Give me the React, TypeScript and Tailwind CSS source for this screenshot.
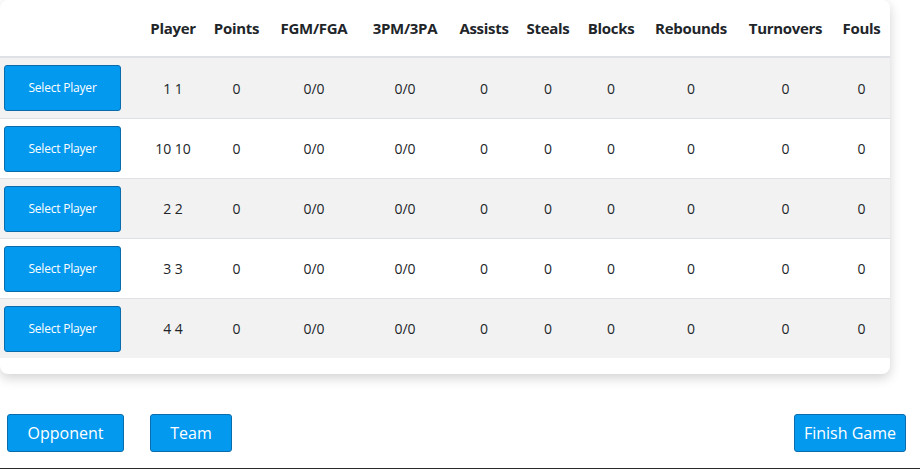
const columns = [
  { label: "", w: "w-[141px]" },
  { label: "Player", w: "w-[64px]" },
  { label: "Points", w: "w-[63px]" },
  { label: "FGM/FGA", w: "w-[92px]" },
  { label: "3PM/3PA", w: "w-[90px]" },
  { label: "Assists", w: "w-[68px]" },
  { label: "Steals", w: "w-[60px]" },
  { label: "Blocks", w: "w-[66px]" },
  { label: "Rebounds", w: "w-[94px]" },
  { label: "Turnovers", w: "w-[95px]" },
  { label: "Fouls", w: "w-[57px]" },
];

const players = ["1 1", "10 10", "2 2", "3 3", "4 4"];

export default function App() {
  return (
    <div className="h-[469px] w-[920px] bg-white font-['Open_Sans',sans-serif] text-[#212529] flex flex-col border-b border-[#2a2a2a]">
      {/* Stats table card */}
      <div className="w-[890px] rounded-lg bg-white shadow-[0_4px_12px_rgba(0,0,0,0.18)] pb-4">
        <div className="flex h-[58px] items-center pt-px border-b-2 border-[#dee2e6]">
          {columns.map((c, i) => (
            <div key={i} className={`${c.w} shrink-0 text-center text-[15px] font-bold tracking-[-0.3px]`}>
              {c.label}
            </div>
          ))}
        </div>
        {players.map((p, r) => (
          <div
            key={p}
            className={`flex h-[60px] items-center ${r > 0 ? "border-t border-[#dee2e6]" : ""} ${r % 2 === 0 ? "bg-[#f2f2f2]" : "bg-white"}`}
          >
            <div className="w-[141px] shrink-0 pl-1">
              <button className="h-[46px] w-[117px] rounded-[3px] border border-[#0b6cad] bg-[#0399ef] text-[12px] text-white tracking-[-0.2px]">
                Select Player
              </button>
            </div>
            <div className="w-[64px] shrink-0 text-center text-[14px]">{p}</div>
            <div className="w-[63px] shrink-0 text-center text-[14px]">0</div>
            <div className="w-[92px] shrink-0 text-center text-[14px]">0/0</div>
            <div className="w-[90px] shrink-0 text-center text-[14px]">0/0</div>
            <div className="w-[68px] shrink-0 text-center text-[14px]">0</div>
            <div className="w-[60px] shrink-0 text-center text-[14px]">0</div>
            <div className="w-[66px] shrink-0 text-center text-[14px]">0</div>
            <div className="w-[94px] shrink-0 text-center text-[14px]">0</div>
            <div className="w-[95px] shrink-0 text-center text-[14px]">0</div>
            <div className="w-[57px] shrink-0 text-center text-[14px]">0</div>
          </div>
        ))}
      </div>

      {/* Footer actions */}
      <div className="mt-10 flex items-center px-[7px] pr-[14px]">
        <button className="h-[38px] w-[117px] rounded-[3px] border border-[#0b6cad] bg-[#0399ef] text-[16px] text-white">
          Opponent
        </button>
        <button className="ml-[26px] h-[38px] w-[82px] rounded-[3px] border border-[#0b6cad] bg-[#0399ef] text-[16px] text-white">
          Team
        </button>
        <button className="ml-auto h-[38px] w-[112px] rounded-[3px] border border-[#0b6cad] bg-[#0399ef] text-[16px] text-white">
          Finish Game
        </button>
      </div>
    </div>
  );
}
